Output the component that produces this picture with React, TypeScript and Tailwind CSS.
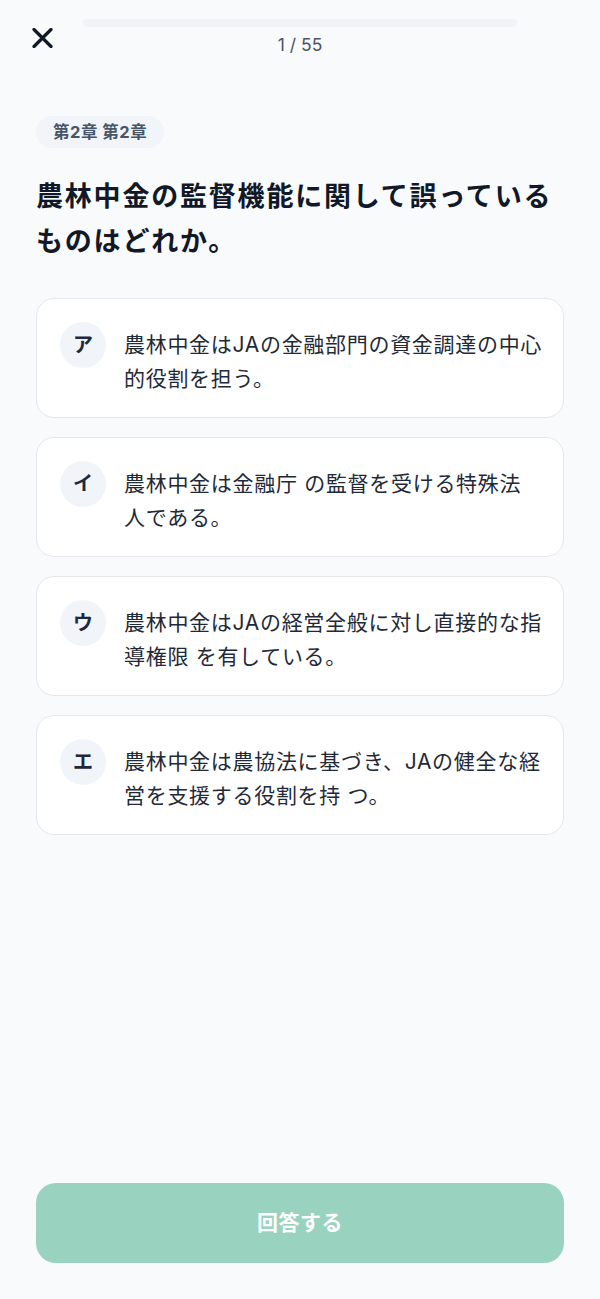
import React from 'react';

const choices = [
  { key: 'ア', lines: ['農林中金はJAの金融部門の資金調達の中心', '的役割を担う。'] },
  { key: 'イ', lines: ['農林中金は金融庁 の監督を受ける特殊法', '人である。'] },
  { key: 'ウ', lines: ['農林中金はJAの経営全般に対し直接的な指', '導権限 を有している。'] },
  { key: 'エ', lines: ['農林中金は農協法に基づき、JAの健全な経', '営を支援する役割を持 つ。'] },
];

const App = () => {
  return (
    <div
      className="min-h-screen flex flex-col bg-[#f9fafb] text-[#111827]"
      style={{ fontFamily: 'Inter, "Noto Sans CJK JP", sans-serif' }}
    >
      {/* Header */}
      <div className="grid grid-cols-[51px_1fr_51px] px-[32px]">
        <button className="pt-[28px] self-start">
          <svg width="21" height="20" viewBox="0 0 21 20" fill="none">
            <path d="M2 1.5L19 18.5M19 1.5L2 18.5" stroke="#111827" strokeWidth="3.2" strokeLinecap="round" />
          </svg>
        </button>
        <div className="pt-[19px] flex flex-col items-center">
          <div className="w-full h-[8px] rounded-full bg-[#f1f4f7]" />
          <div className="mt-[6px] text-[17.5px] leading-[24px] text-[#4b5563]">1 / 55</div>
        </div>
        <div />
      </div>

      <div className="px-[36px]">
        {/* Chapter badge */}
        <div className="mt-[59px] inline-flex h-[32px] items-center rounded-full bg-[#f1f5f9] px-[17px] text-[16.5px] tracking-[0.5px] font-bold text-[#475569]">
          第2章 第2章
        </div>

        {/* Question */}
        <h1 className="mt-[26px] text-[27px] tracking-[1.8px] leading-[45px] font-bold text-[#111827]">
          農林中金の監督機能に関して誤っている
          <br />
          ものはどれか。
        </h1>

        {/* Choices */}
        <div className="mt-[34px] flex flex-col gap-[19px]">
          {choices.map((c) => (
            <div
              key={c.key}
              className="flex items-start gap-[18px] h-[120px] rounded-[18px] border border-[#e5e7eb] bg-white px-[23px] pt-[23px]"
            >
              <div className="flex h-[46px] w-[46px] shrink-0 items-center justify-center rounded-full bg-[#f1f5f9] text-[20px] font-bold text-[#1e293b]">
                {c.key}
              </div>
              <p className="mt-[6px] whitespace-nowrap text-[21px] tracking-[0.7px] leading-[34px] text-[#1f2937]">
                {c.lines[0]}
                <br />
                {c.lines[1]}
              </p>
            </div>
          ))}
        </div>
      </div>

      {/* Submit */}
      <div className="mt-auto px-[36px] pb-[36px]">
        <button className="flex h-[80px] w-full items-center justify-center rounded-[20px] bg-[#99d3c0] text-[21px] tracking-[0.5px] font-bold text-white">
          回答する
        </button>
      </div>
    </div>
  );
};

export default App;
